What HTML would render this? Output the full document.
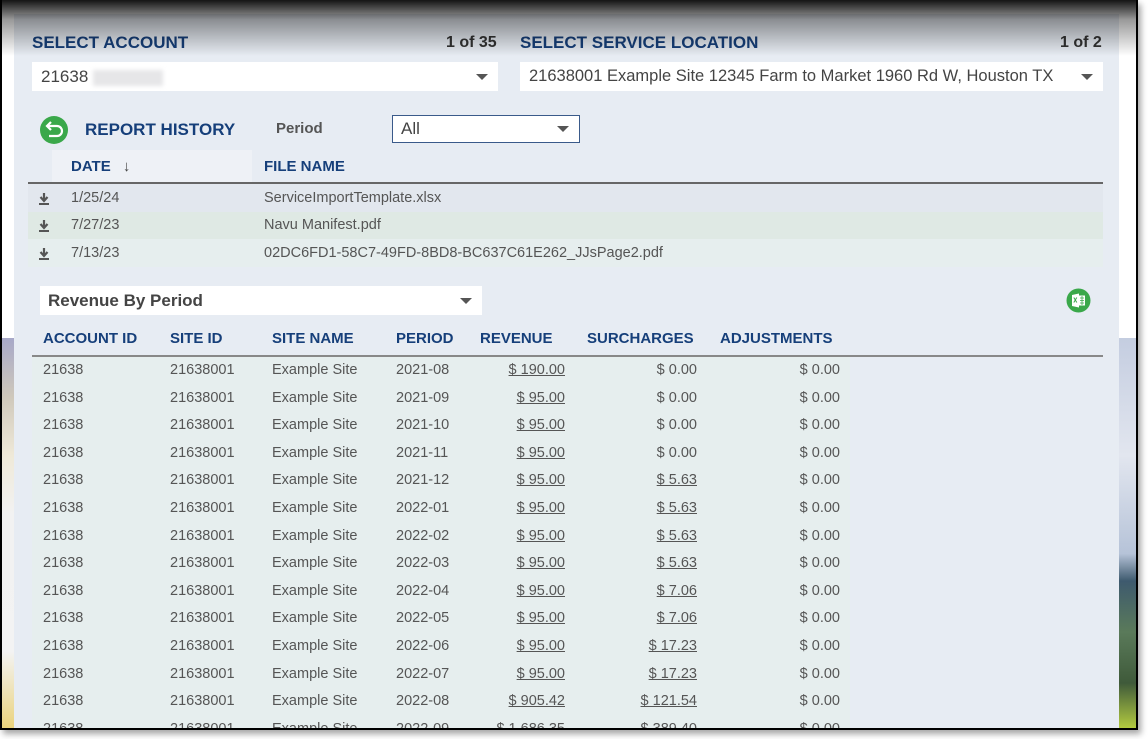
<!DOCTYPE html>
<html><head><style>
*{margin:0;padding:0;box-sizing:border-box}
body{width:1148px;height:739px;background:#fff;position:relative;overflow:hidden;font-family:"Liberation Sans",sans-serif}
.abs{position:absolute}
#frame{left:0;top:0;width:1138px;height:730px;background:#fff;overflow:hidden;box-shadow:3px 4px 6px rgba(0,0,0,.35)}
#bord{left:0;top:0;width:1138px;height:730px;border:2px solid #000;border-top:0}
#leftbg{left:0;top:338px;width:16px;height:392px;background:linear-gradient(#a7a8c8 0%,#cfc8bb 15%,#efe9d8 30%,#f2f2f2 45%,#f3f3f3 80%,#ead27a 100%)}
#rightbg{left:1117px;top:338px;width:20px;height:392px;background:linear-gradient(#c4cde0 0%,#e2e6ef 30%,#b6c3d8 55%,#3e5a6e 62%,#5a7a5a 75%,#3f5a3a 88%,#b8d040 100%)}
#panel{left:14px;top:14px;width:1105px;height:716px;background:#e7ecf3}
.h{color:#163f7a;font-weight:bold;font-size:17px}
.cnt{color:#333;font-weight:bold;font-size:16px}
.sel{background:#fff;height:29px;font-size:17px;color:#444;padding:5px 9px;white-space:nowrap}
.arr{position:absolute;right:10px;top:12px;width:0;height:0;border-left:6px solid transparent;border-right:6px solid transparent;border-top:6px solid #555}
.txt{font-size:14.5px;color:#555;white-space:nowrap}
.th{color:#163f7a;font-weight:bold;font-size:15px}
.r{text-align:right}
.u{text-decoration:underline}
</style></head><body>
<div id="frame" class="abs">
<div id="leftbg" class="abs"></div>
<div id="rightbg" class="abs"></div>
<div id="panel" class="abs"></div>

<div class="abs h" style="left:32px;top:33px">SELECT ACCOUNT</div>
<div class="abs cnt" style="left:446px;top:34px">1 of 35</div>
<div class="abs h" style="left:520px;top:33px">SELECT SERVICE LOCATION</div>
<div class="abs cnt" style="left:1060px;top:34px">1 of 2</div>
<div class="abs sel" style="left:32px;top:62px;width:466px">21638 <span style="display:inline-block;width:70px;height:16px;background:#e6e6e8;filter:blur(2px);vertical-align:middle"></span><div class="arr"></div></div>
<div class="abs sel" style="left:520px;top:62px;width:583px;font-size:16.5px">21638001 Example Site 12345 Farm to Market 1960 Rd W, Houston TX<div class="arr"></div></div>

<svg class="abs" style="left:39px;top:115px" width="30" height="30" viewBox="0 0 30 30"><circle cx="15" cy="15" r="14" fill="#3aa84a"/><path d="M9 11h9a5 5 0 0 1 0 10h-8" fill="none" stroke="#fff" stroke-width="2.2"/><path d="M12 7l-4 4 4 4" fill="none" stroke="#fff" stroke-width="2.2"/></svg>
<div class="abs h" style="left:85px;top:120px">REPORT HISTORY</div>
<div class="abs" style="left:276px;top:120px;font-size:15px;font-weight:bold;color:#555">Period</div>
<div class="abs sel" style="left:392px;top:115px;width:188px;height:28px;border:1px solid #3a5a8a;padding:3px 8px">All<div class="arr" style="top:10px"></div></div>

<div class="abs" style="left:52px;top:150px;width:200px;height:33px;background:#eef1f6"></div>
<div class="abs th" style="left:71px;top:158px">DATE <span style="color:#444;margin-left:8px">&#8595;</span></div>
<div class="abs th" style="left:264px;top:158px">FILE NAME</div>
<div class="abs" style="left:28px;top:182px;width:1075px;height:2px;background:#666"></div>
<div class="abs" style="left:28px;top:184px;width:1075px;height:28px;background:#e2e7ee"></div>
<div class="abs" style="left:28px;top:212px;width:1075px;height:27px;background:#dfe9e4"></div>
<div class="abs" style="left:28px;top:239px;width:1075px;height:28px;background:#e6eeee"></div>
<svg class="abs" style="left:38px;top:192px" width="12" height="13" viewBox="0 0 12 13"><path d="M6 1v7M2.5 5l3.5 4 3.5-4" fill="none" stroke="#555" stroke-width="2.2"/><rect x="1" y="11" width="10" height="2" fill="#555"/></svg>
<svg class="abs" style="left:38px;top:219px" width="12" height="13" viewBox="0 0 12 13"><path d="M6 1v7M2.5 5l3.5 4 3.5-4" fill="none" stroke="#555" stroke-width="2.2"/><rect x="1" y="11" width="10" height="2" fill="#555"/></svg>
<svg class="abs" style="left:38px;top:247px" width="12" height="13" viewBox="0 0 12 13"><path d="M6 1v7M2.5 5l3.5 4 3.5-4" fill="none" stroke="#555" stroke-width="2.2"/><rect x="1" y="11" width="10" height="2" fill="#555"/></svg>
<div class="abs txt" style="left:71px;top:190px">1/25/24</div>
<div class="abs txt" style="left:71px;top:217px">7/27/23</div>
<div class="abs txt" style="left:71px;top:245px">7/13/23</div>
<div class="abs txt" style="left:264px;top:190px">ServiceImportTemplate.xlsx</div>
<div class="abs txt" style="left:264px;top:217px">Navu Manifest.pdf</div>
<div class="abs txt" style="left:264px;top:245px">02DC6FD1-58C7-49FD-8BD8-BC637C61E262_JJsPage2.pdf</div>

<div class="abs sel" style="left:40px;top:286px;width:442px;font-weight:bold;color:#444;padding:5px 8px">Revenue By Period<div class="arr"></div></div>
<svg class="abs" style="left:1066px;top:288px" width="25" height="25" viewBox="0 0 25 25"><circle cx="12.5" cy="12.5" r="12" fill="#3aa84a"/><path d="M6 7l7-1.5v14L6 18z" fill="#fff"/><rect x="13" y="7.5" width="6" height="10" fill="#fff"/><path d="M7.8 9.5l3 5M10.8 9.5l-3 5" stroke="#3aa84a" stroke-width="1"/><path d="M14 10h4M14 12.5h4M14 15h4M16 8v9" stroke="#3aa84a" stroke-width=".8"/></svg>

<div class="abs th" style="left:43px;top:330px">ACCOUNT ID</div>
<div class="abs th" style="left:170px;top:330px">SITE ID</div>
<div class="abs th" style="left:272px;top:330px">SITE NAME</div>
<div class="abs th" style="left:396px;top:330px">PERIOD</div>
<div class="abs th" style="left:480px;top:330px">REVENUE</div>
<div class="abs th" style="left:587px;top:330px">SURCHARGES</div>
<div class="abs th" style="left:720px;top:330px">ADJUSTMENTS</div>
<div class="abs" style="left:32px;top:355px;width:1071px;height:2px;background:#888"></div>
<div class="abs" style="left:32px;top:357px;width:818px;height:373px;background:#e6eeee"></div>
<div id="rows"></div>
<div class="abs" style="left:0;top:0;width:1138px;height:56px;background:linear-gradient(rgba(0,0,0,.92),rgba(0,0,0,.4) 35%,rgba(0,0,0,0))"></div>
<div id="bord" class="abs"></div>
</div>
<script>
var d=[["2021-08","190.00","0.00"],["2021-09","95.00","0.00"],["2021-10","95.00","0.00"],["2021-11","95.00","0.00"],["2021-12","95.00","5.63"],["2022-01","95.00","5.63"],["2022-02","95.00","5.63"],["2022-03","95.00","5.63"],["2022-04","95.00","7.06"],["2022-05","95.00","7.06"],["2022-06","95.00","17.23"],["2022-07","95.00","17.23"],["2022-08","905.42","121.54"],["2022-09","1,686.35","389.40"]];
var h="";
d.forEach(function(r,i){var y=362+i*27.6;
h+='<div class="abs txt" style="left:43px;top:'+y+'px">21638</div><div class="abs txt" style="left:170px;top:'+y+'px">21638001</div><div class="abs txt" style="left:272px;top:'+y+'px">Example Site</div><div class="abs txt" style="left:396px;top:'+y+'px">'+r[0]+'</div><div class="abs txt r u" style="right:573px;top:'+y+'px">$ '+r[1]+'</div><div class="abs txt r'+(r[2]!="0.00"?" u":"")+'" style="right:441px;top:'+y+'px">$ '+r[2]+'</div><div class="abs txt r" style="right:298px;top:'+y+'px">$ 0.00</div>';});
document.getElementById("rows").outerHTML=h;
</script>
</body></html>
